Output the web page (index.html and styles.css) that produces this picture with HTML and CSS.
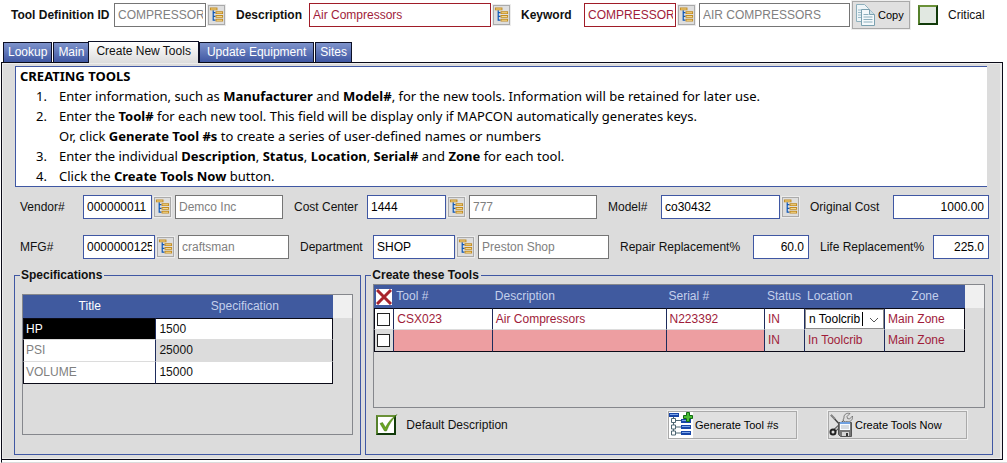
FILE: index.html
```html
<!DOCTYPE html>
<html lang="en">
<head>
<meta charset="utf-8">
<title>Tool Definition</title>
<link rel="stylesheet" href="styles.css">
</head>
<body>
<svg class="defs" aria-hidden="true">
  <symbol id="tree" viewBox="0 0 16 18">
    <path d="M4.500 4v11M4 6.500h3M4 10.500h3M4 14.500h3" fill="none" stroke="#0f58b8" stroke-width="1.300"/>
    <path d="M1 1h8v3H1zM7 5h8v3H7zM7 9h8v3H7zM7 13h8v3H7z" fill="#c08a22"/>
    <path d="M2 2h6v1H2zM8 6h6v1H8zM8 10h6v1H8zM8 14h6v1H8z" fill="#f5d98c"/>
  </symbol>
</svg>

<header class="topbar">
  <label class="strong" for="toolId">Tool Definition ID</label>
  <input class="box muted" id="toolId" value="COMPRESSOR" readonly>
  <button class="pick" type="button" aria-label="Browse tools"><svg><use href="#tree"/></svg></button>
  <label class="strong" for="desc">Description</label>
  <input class="box required" id="desc" value="Air Compressors">
  <button class="pick" type="button" aria-label="Browse descriptions"><svg><use href="#tree"/></svg></button>
  <label class="strong" for="keyword">Keyword</label>
  <input class="box required" id="keyword" value="COMPRESSOR">
  <button class="pick" type="button" aria-label="Browse keywords"><svg><use href="#tree"/></svg></button>
  <input class="box muted keyname" aria-label="Keyword name" value="AIR COMPRESSORS" readonly>
  <button class="action copy" type="button">
    <svg width="22" height="26" viewBox="0 0 22 26">
      <path d="M2.500 2.500h8l4 4v13h-12z" fill="#eef5f8" stroke="#8eb0bd"/>
      <path d="M4 8h7M4 10.500h7M4 13h7M4 15.500h7" stroke="#9bbac7"/>
      <path d="M7.500 7.500h8l5 5v11h-13z" fill="#f4f9fb" stroke="#7ba1b0"/>
      <path d="M15.500 7.500v5h5" fill="#cfe0e7" stroke="#7ba1b0"/>
      <path d="M9.500 12.500h5M9.500 15h9M9.500 17.500h9M9.500 20h9" stroke="#8db0be"/>
    </svg>
    Copy
  </button>
  <label class="tick critical"><span class="tickbox"><input type="checkbox"></span>Critical</label>
</header>

<nav class="tabs">
  <button type="button">Lookup</button>
  <button type="button">Main</button>
  <button type="button" class="wide active">Create New Tools</button>
  <button type="button" class="wide">Update Equipment</button>
  <button type="button">Sites</button>
</nav>

<main class="panel">
  <section class="help">
    <h1>CREATING TOOLS</h1>
    <ol>
      <li>Enter information, such as <b>Manufacturer</b> and <b>Model#</b>, for the new tools. Information will be retained for later use.</li>
      <li>Enter the <b>Tool#</b> for each new tool. This field will be display only if MAPCON automatically generates keys.<br>Or, click <b>Generate Tool #s</b> to create a series of user-defined names or numbers</li>
      <li>Enter the individual <b>Description</b>, <b>Status</b>, <b>Location</b>, <b>Serial#</b> and <b>Zone</b> for each tool.</li>
      <li>Click the <b>Create Tools Now</b> button.</li>
    </ol>
  </section>

  <div class="fields first">
    <label for="vendor">Vendor#</label>
    <input class="box" id="vendor" value="000000011">
    <button class="pick" type="button" aria-label="Browse vendors"><svg><use href="#tree"/></svg></button>
    <input class="box muted" aria-label="Vendor name" value="Demco Inc" readonly>
    <label for="cost">Cost Center</label>
    <input class="box" id="cost" value="1444">
    <button class="pick" type="button" aria-label="Browse cost centers"><svg><use href="#tree"/></svg></button>
    <input class="box muted" aria-label="Cost center name" value="777" readonly>
    <label for="model">Model#</label>
    <input class="box" id="model" value="co30432">
    <button class="pick" type="button" aria-label="Browse models"><svg><use href="#tree"/></svg></button>
    <label for="orig">Original Cost</label>
    <input class="box number" id="orig" value="1000.00">
  </div>
  <div class="fields second">
    <label for="mfg">MFG#</label>
    <input class="box" id="mfg" value="0000000125">
    <button class="pick" type="button" aria-label="Browse manufacturers"><svg><use href="#tree"/></svg></button>
    <input class="box muted" aria-label="Manufacturer name" value="craftsman" readonly>
    <label for="dept">Department</label>
    <input class="box" id="dept" value="SHOP">
    <button class="pick" type="button" aria-label="Browse departments"><svg><use href="#tree"/></svg></button>
    <input class="box muted" aria-label="Department name" value="Preston Shop" readonly>
    <label for="repair">Repair Replacement%</label>
    <input class="box number" id="repair" value="60.0">
    <label for="life">Life Replacement%</label>
    <input class="box number" id="life" value="225.0">
  </div>

  <div class="groups">
    <fieldset class="specs">
      <legend>Specifications</legend>
      <div class="frame">
        <table>
          <colgroup><col class="c-title"><col></colgroup>
          <thead><tr><th class="current">Title</th><th>Specification</th></tr></thead>
          <tbody>
            <tr><td class="selected">HP</td><td>1500</td></tr>
            <tr><td class="dim">PSI</td><td class="alt">25000</td></tr>
            <tr><td class="dim">VOLUME</td><td>15000</td></tr>
          </tbody>
        </table>
        <div class="corner"></div>
      </div>
    </fieldset>

    <fieldset class="tools">
      <legend>Create these Tools</legend>
      <div class="frame">
        <table>
          <colgroup><col class="c-check"><col class="c-tool"><col class="c-desc"><col class="c-serial"><col class="c-status"><col class="c-place"><col class="c-place"></colgroup>
          <thead><tr>
            <th class="mark"><svg width="16" height="16" viewBox="0 0 16 16" role="img" aria-label="Delete"><path fill="#fff" d="M0 0h16v16H0z"/><path d="M1 1l14 14M15 1L1 15" stroke="#a8242c" stroke-width="3"/></svg></th>
            <th>Tool #</th><th>Description</th><th>Serial #</th><th>Status</th><th>Location</th><th class="mid">Zone</th>
          </tr></thead>
          <tbody>
            <tr>
              <td class="mark"><input type="checkbox" aria-label="Delete CSX023"></td>
              <td>CSX023</td><td>Air Compressors</td><td>N223392</td><td>IN</td>
              <td class="combo"><div><select aria-label="Location"><option>n Toolcrib</option></select><i class="caret"></i><svg width="10" height="6" viewBox="0 0 10 6"><path d="M1 1l4 4 4-4" fill="none" stroke="#555"/></svg></div></td>
              <td>Main Zone</td>
            </tr>
            <tr class="alt">
              <td class="mark"><input type="checkbox" aria-label="Delete new tool"></td>
              <td class="missing"></td><td class="missing"></td><td class="missing"></td><td>IN</td><td>In Toolcrib</td><td>Main Zone</td>
            </tr>
          </tbody>
        </table>
        <div class="corner"></div>
      </div>
      <div class="actions">
        <label class="tick"><span class="tickbox"><input type="checkbox" checked><svg width="24" height="22" viewBox="0 0 24 22"><path d="M4 9.500l2.500-1 3 5C12 8.500 15.500 4 21 .5 16.500 5 13 10.500 10.500 17H8.500z" fill="#6aa521" stroke="#3c7212" stroke-width=".5"/></svg></span>Default Description</label>
        <button class="action generate" type="button">
          <svg width="24" height="26" viewBox="0 0 24 26">
            <path fill="#fff" d="M0 0h24v26H0z"/>
            <path d="M4.500 4v17M5 8.500h8M5 15h8M5 21h8" fill="none" stroke="#4d6672"/>
            <path d="M2.500 6.500h4v4h-4zM2.500 13h4v4h-4zM2.500 19h4v4h-4z" fill="#fff" stroke="#4d6672"/>
            <path d="M0 1h10v4H0zM12 7h10v4H12zM12 13h10v4H12zM12 19h10v4H12z" fill="#1746a8"/>
            <path d="M1 2h8v1H1zM13 8h8v1h-8zM13 14h8v1h-8zM13 20h8v1h-8z" fill="#7fa6ea"/>
            <path d="M17.500.5h3v3h3v3h-3v3h-3v-3h-3v-3h3z" fill="#4bbd35" stroke="#116b12"/>
          </svg>
          Generate Tool #s
        </button>
        <button class="action create" type="button">
          <svg width="24" height="26" viewBox="0 0 24 26">
            <path d="M2 3l11 12" stroke="#444" stroke-width="1.500"/>
            <path d="M2 3l4 4" stroke="#888" stroke-width="2"/>
            <path d="M4 20L18 7" stroke="#555" stroke-width="3.500"/>
            <path d="M4 20L18 7" stroke="#c9c9c9" stroke-width="1.500"/>
            <path d="M21 1.500l-3 3 .5 2 2 .5 3-3c.5 4-2 6-5 5.500L16 10l-2-2 1-2c-.5-3 2-5.500 6-4.500z" fill="#ddd" stroke="#666" stroke-width=".8"/>
            <circle cx="4" cy="20" r="2.500" fill="#ddd" stroke="#222" stroke-width="2"/>
            <path d="M9.500 10.500h13v14h-11l-2-2z" fill="#777" stroke="#555"/>
            <path d="M11 10h10v8H11z" fill="#f7fbff"/>
            <path d="M11 10h10v2H11z" fill="#6fa0e0"/>
            <path d="M12 14h8M12 16h8" stroke="#b5bcc4"/>
            <path d="M13 20h7v4h-7z" fill="#d5d5d5"/><path d="M17 21h2v3h-2z" fill="#333"/>
          </svg>
          Create Tools Now
        </button>
      </div>
    </fieldset>
  </div>
</main>
<footer class="strip"></footer>
</body>
</html>
```
FILE: styles.css
```css
* { box-sizing: border-box; }
body {
  margin: 0;
  min-height: 100vh;
  display: flex;
  flex-direction: column;
  background: #fff;
  color: #111;
  font: 12px/16px "Liberation Sans", Arial, sans-serif;
}
input, button, select { font: inherit; color: inherit; margin: 0; }
label { white-space: nowrap; }
.defs { position: absolute; width: 0; height: 0; }

.box {
  width: 100%;
  min-width: 0;
  height: 24px;
  padding: 0 2px 0 3px;
  border: 1px solid #3f57a3;
  border-radius: 0;
  background: #fff;
  color: #000;
}
.muted { border-color: #757575; color: #808080; }
.required { border-color: #a01c28; color: #a01c3a; }
.number { text-align: right; padding-right: 4px; }
.strong { font-weight: bold; }

.pick {
  width: 17px;
  height: 20px;
  padding: 0;
  border: 1px solid #aaa;
  outline: 1px solid #ececec;
  background: #dedede;
}
.pick svg { display: block; width: 15px; height: 18px; }

.topbar {
  display: grid;
  grid-template-columns: 103px 92px 30px 73px minmax(92px, 1fr) 30px 63px 92px 23px 151px 68px 89px;
  align-items: center;
  height: 28px;
  margin: 1px 0 12px 11px;
}
.topbar .pick, .fields .pick { margin-left: 2px; }

.action {
  display: flex;
  align-items: center;
  height: 28px;
  gap: 2px;
  padding: 0;
  border: 1px solid #a9a9a9;
  outline: 1px solid #eee;
  background: #e0e0e0;
  color: #000;
  font-size: 11px;
  white-space: nowrap;
}
.copy { width: 58px; margin-left: 2px; padding-left: 1px; }

.tick { display: flex; align-items: center; gap: 10px; }
.tickbox { position: relative; display: flex; }
.tickbox input {
  appearance: none;
  width: 20px;
  height: 20px;
  border: 2px solid #113a0a;
  border-top-color: #6b9138;
  border-left-color: #56812c;
  background: #e1e8e1;
}
.tickbox input:checked { background: #fff; }
.tickbox svg { position: absolute; left: 0; top: -1px; pointer-events: none; }

.tabs { display: flex; align-items: flex-end; gap: 1px; padding-left: 3px; }
.tabs button {
  height: 20px;
  padding: 0 4px 2px;
  border: 1px solid #0d1026;
  border-bottom: 0;
  background: linear-gradient(#7e93cb, #3f57a3);
  color: #fff;
}
.tabs .wide { padding: 0 7px 2px; }
.tabs .active {
  position: relative;
  height: 22px;
  margin: 0 -1px -1px -2px;
  padding-bottom: 4px;
  background: linear-gradient(#fff, #dcdcdc);
  color: #111;
}

.panel {
  display: flex;
  flex: 1;
  flex-direction: column;
  margin: 0 4px 0 1px;
  padding: 3px 9px 4px 12px;
  border: 1px solid #0b0b18;
  background: #dcdcdc;
  box-shadow: inset 1px 1px #ececec, inset -2px -1px #ececec;
}
.help {
  margin: 0 6px 8px 1px;
  border: 1px solid #3f57a3;
  border-right: 0;
  background: #fff;
  color: #000;
  font: 13px/20px "Noto Sans", "Open Sans", sans-serif;
}
.help h1 { margin: 0 4px; font-size: 13px; line-height: 19px; }
.help ol { margin: 0; padding-left: 43px; list-style: none; counter-reset: step; }
.help li { counter-increment: step; }
.help li::before {
  content: counter(step) ".";
  display: inline-block;
  width: 23px;
  margin-left: -23px;
}

.fields { display: grid; align-items: center; margin: 0 4px 16px 6px; }
.first { grid-template-columns: 63px 69px 23px minmax(60px, 108fr) 84px 79px 23px minmax(60px, 128fr) 64px minmax(80px, 119fr) 19px 94px 96px; }
.second { grid-template-columns: 63px 72px 23px minmax(60px, 111fr) 84px 82px 23px minmax(60px, 131fr) 144px 56px 124px 56px; margin-bottom: 8px; }
.box + label, .fields .pick + label { padding-left: 11px; }

.groups { display: grid; grid-template-columns: 347fr 627fr; gap: 4px; flex: 1; }
fieldset {
  min-width: 0;
  margin: 0;
  padding: 1px 7px 0;
  border: 1px solid #3f57a3;
}
legend { margin-left: -2px; padding: 0 2px 0 1px; font-weight: bold; line-height: 16px; }
.specs { padding-top: 11px; }
.frame {
  display: flex;
  align-items: flex-start;
  min-height: 124px;
  border: 1px solid #85878c;
}
.specs .frame { min-height: 141px; }
.corner { flex: 0 0 19px; height: 23px; background: #f0f0f0; }

table { flex: 1; width: 0; table-layout: fixed; border-spacing: 0; }
.c-title { width: 43%; }
.c-check { width: 20px; }
.c-tool, .c-serial { width: 17%; }
.c-desc { width: 30%; }
.c-status { width: 40px; }
.c-place { width: 80px; }
th, td { overflow: hidden; white-space: nowrap; }
th {
  height: 23px;
  padding: 0 2px 1px;
  background: #405a9f;
  color: #c4d0ec;
  font-weight: normal;
}
th.current { color: #fff; }
.tools th { text-align: left; }
.tools th.mid { text-align: center; }
td {
  height: 22px;
  padding: 0 3px 1px;
  border-right: 1px solid #1e2c5c;
  border-bottom: 1px solid #dcdcdc;
  background: #fff;
}
td:first-child { border-left: 1px solid #0b0b18; padding-left: 2px; }
td:last-child { border-right-color: #0b0b18; }
tbody tr:first-child td { border-top: 1px solid #0b0b18; }
tbody tr:last-child td { border-bottom-color: #0b0b18; }
.dim { color: #808080; }
.selected { background: #000; color: #fff; }
.alt, .alt td { background: #dcdcdc; }
.tools td { color: #a01c3a; }
.alt .missing { background: #ed9ea1; }
th.mark, td.mark { padding: 0 0 0 2px; }
.mark svg, .mark input { display: block; }
.mark input {
  appearance: none;
  width: 13px;
  height: 13px;
  border: 1px solid #222;
  background: #fff;
}
.tools .combo { padding: 0; }
.combo div { position: relative; }
.combo select {
  appearance: none;
  display: block;
  width: 100%;
  height: 20px;
  padding: 0 20px 0 3px;
  border: 1px solid #8c8c8c;
  border-radius: 0;
  background: #fff;
  color: #000;
}
.combo svg { position: absolute; right: 5px; top: 8px; pointer-events: none; }
.caret { position: absolute; left: 57px; top: 3px; width: 1px; height: 14px; background: #000; }

.actions { display: flex; align-items: center; margin: 3px 18px 0 3px; }
.actions .tick { flex: 1; }
.generate { width: 129px; margin-right: 31px; }
.create { width: 139px; }
.strip { height: 3px; margin-left: 1px; border-left: 1px solid #0b0b18; border-bottom: 1px solid #dcdcdc; }
```
